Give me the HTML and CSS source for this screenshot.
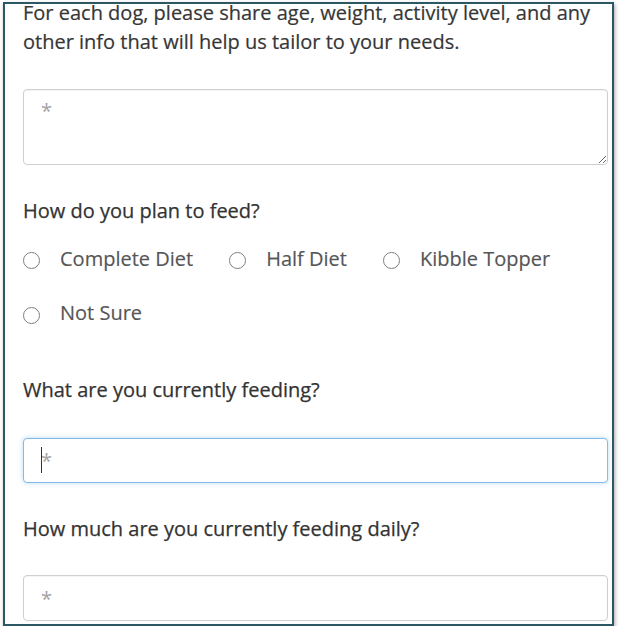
FILE: index.html
```html
<!DOCTYPE html>
<html lang="en">
<head>
<meta charset="utf-8">
<title>Feeding form</title>
<link rel="stylesheet" href="styles.css">
</head>
<body>
<div class="frame">
  <p class="intro">For each dog, please share age, weight, activity level, and any other info that will help us tailor to your needs.</p>
  <textarea class="field area" placeholder="*"></textarea>

  <div class="question q1">How do you plan to feed?</div>
  <div class="radios">
    <label class="radio"><span class="dot"></span><span class="rlabel">Complete Diet</span></label>
    <label class="radio"><span class="dot"></span><span class="rlabel">Half Diet</span></label>
    <label class="radio"><span class="dot"></span><span class="rlabel">Kibble Topper</span></label>
    <label class="radio"><span class="dot"></span><span class="rlabel">Not Sure</span></label>
  </div>

  <div class="question q2">What are you currently feeding?</div>
  <div class="focus-wrap">
    <input class="field line focused" type="text" placeholder="*">
    <span class="caret"></span>
  </div>

  <div class="question q3">How much are you currently feeding daily?</div>
  <input class="field line last" type="text" placeholder="*">
</div>
</body>
</html>
```

FILE: styles.css
```css
* { box-sizing: border-box; }

html, body {
  margin: 0;
  padding: 0;
  background: #ffffff;
}

body {
  font-family: "Open Sans", "Liberation Sans", sans-serif;
  font-size: 20px;
  line-height: 1.43;
  color: #333333;
}

.frame {
  margin: 2px 0 0 3px;
  width: 611px;
  height: 624px;
  border: 2px solid #2c5866;
  padding: 0 4px 0 18px;
  box-shadow: 1px 2px 4px rgba(0, 0, 0, 0.35);
  display: flex;
  flex-direction: column;
}

.intro {
  margin: -5px 0 0 0;
  color: #363636;
  -webkit-text-stroke: 0.2px #363636;
}

.field {
  display: block;
  width: 100%;
  font-family: "Open Sans", "Liberation Sans", sans-serif;
  font-size: 20px;
  color: #333333;
  background: #ffffff;
  border: 1px solid #cfcfcf;
  border-radius: 4px;
  box-shadow: inset 0 1px 1px rgba(0, 0, 0, 0.05);
  outline: none;
  padding: 0 17px;
  flex: none;
}

.field::placeholder {
  color: #a3a3a3;
  opacity: 1;
}

.area {
  margin-top: 33px;
  height: 76px;
  padding-top: 7px;
  line-height: 1.43;
  resize: vertical;
}

.line {
  height: 45px;
  line-height: normal;
}

.last {
  margin-top: 32px;
  height: 46px;
}

.question {
  color: #333333;
  -webkit-text-stroke: 0.25px #333333;
  flex: none;
}

.q1 { margin-top: 32px; }
.q2 { margin-top: 48px; }
.q3 { margin-top: 32px; }

.radios {
  margin-top: 19px;
  display: flex;
  flex-wrap: wrap;
  column-gap: 36px;
  row-gap: 26px;
  flex: none;
}

.radio {
  display: flex;
  align-items: center;
  gap: 20px;
  color: #555555;
  -webkit-text-stroke: 0.15px #555555;
}

.dot {
  width: 17px;
  height: 17px;
  border: 1.6px solid #7f7f7f;
  border-radius: 50%;
  margin-top: 3px;
  flex: none;
}

.focus-wrap {
  position: relative;
  margin-top: 33px;
  flex: none;
}

.focused {
  border-color: #86b9e9;
  box-shadow: 0 0 5px rgba(102, 175, 233, 0.45);
}

.caret {
  position: absolute;
  left: 18px;
  top: 9px;
  width: 1px;
  height: 26px;
  background: #333333;
}
```
